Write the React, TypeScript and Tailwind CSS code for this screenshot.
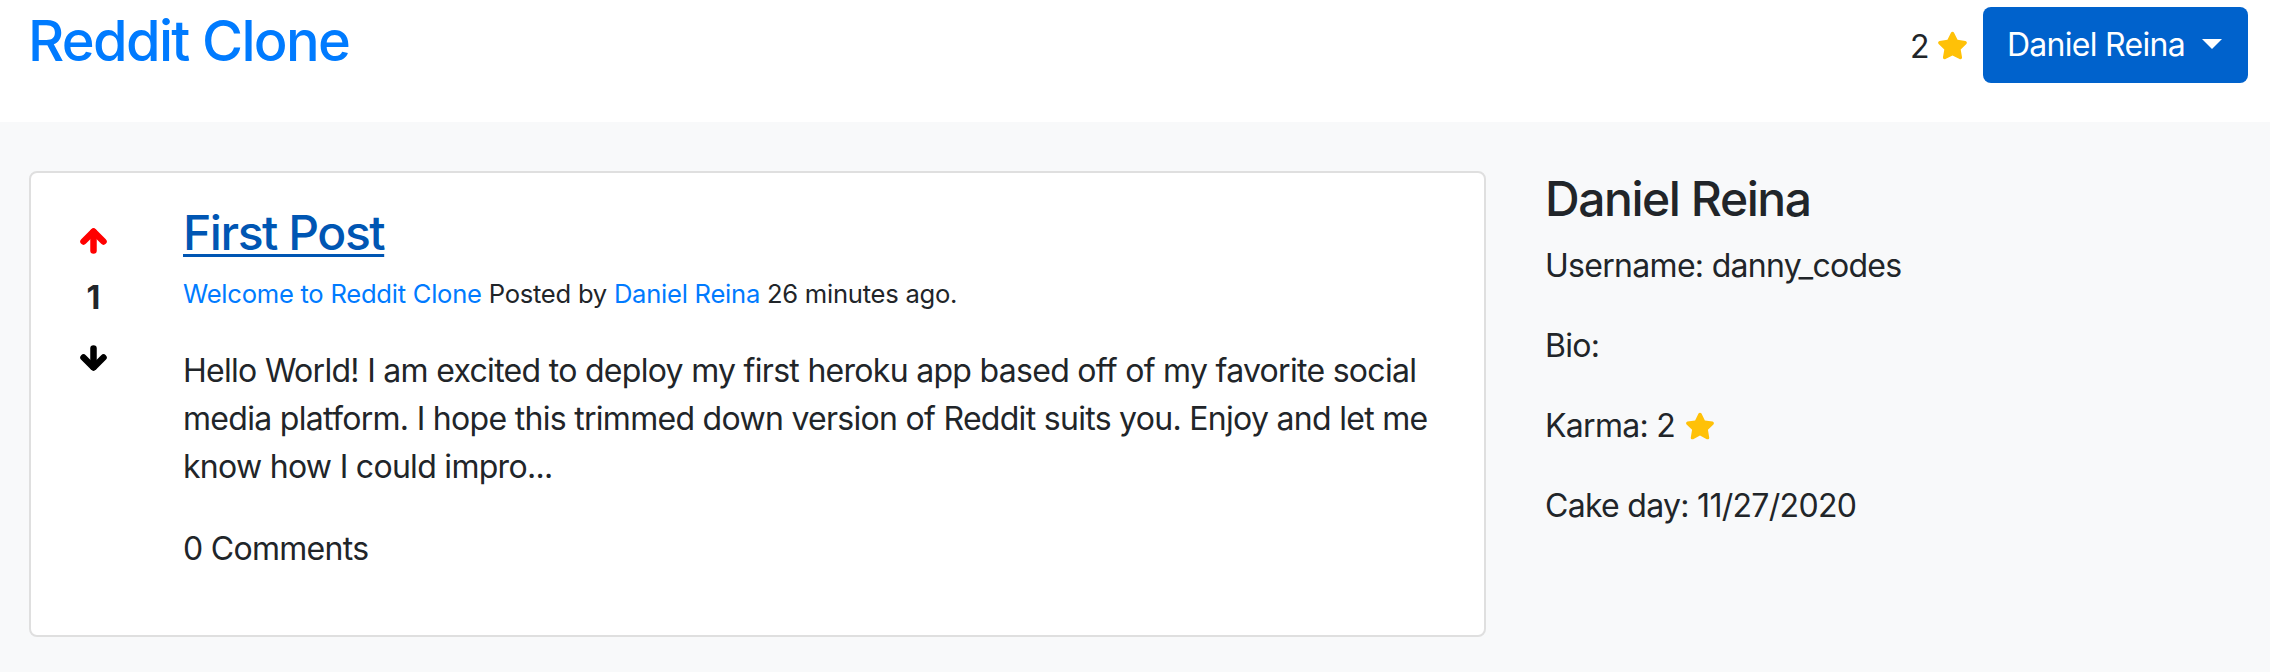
import React from "react";
import { FaStar } from "react-icons/fa";

function Arrow({ down, color }: { down?: boolean; color: string }) {
  return (
    <svg
      width="27"
      height="26"
      viewBox="0 0 27 26"
      className={down ? "rotate-180" : ""}
      fill="none"
      stroke={color}
      strokeWidth="6.5"
      strokeLinecap="round"
      strokeLinejoin="round"
    >
      <path d="M3.5 13.5 L13.5 3.5 L23.5 13.5" />
      <path d="M13.5 4 L13.5 22.5" />
    </svg>
  );
}

export default function App() {
  const t = "tracking-[-0.03em]";
  const b = "tracking-[-0.022em]";
  return (
    <div className="min-h-screen flex flex-col font-['Inter','Liberation_Sans',sans-serif] text-[#212529]">
      <header className="bg-white h-[122px] shrink-0 flex justify-between items-start pl-[28px] pr-[22px]">
        <a className={`mt-[8px] text-[56px] leading-[67px] font-medium text-[#007bff] ${t}`}>Reddit Clone</a>
        <div className="flex items-center mt-[7px]">
          <span className={`text-[32px] leading-[48px] pt-[4px] ${b}`}>2</span>
          <FaStar className="ml-[8px] text-[#ffc107]" size={31} />
          <button className={`ml-[15px] h-[76px] pl-[24px] pr-[26px] bg-[#0062cc] rounded-[8px] text-white text-[32px] leading-[48px] flex items-center ${b}`}>
            <span>Daniel Reina</span>
            <span className="ml-[17px] w-0 h-0 border-t-[10px] border-t-white border-x-[10px] border-x-transparent mt-[-3px]" />
          </button>
        </div>
      </header>
      <main className="flex-1 bg-[#f8f9fa] flex items-start pt-[48px]">
        <div className="ml-[29px] mt-[1px] w-[1457px] shrink-0 bg-white border-2 border-[#dfdfdf] rounded-[8px] flex">
          <div className="w-[124px] shrink-0 flex flex-col items-center pt-[55px]">
            <Arrow color="#ff0000" />
            <span className={`mt-[20px] text-[32px] leading-[48px] font-bold ${b}`}>1</span>
            <div className="mt-[23px]">
              <Arrow down color="#000000" />
            </div>
          </div>
          <div className="flex-1 pl-[28px] pr-[40px] pt-[31px] pb-[62px]">
            <a className={`block w-fit text-[48px] leading-[1.2] font-medium text-[#0056b3] underline decoration-[3px] underline-offset-[4px] ${t}`}>
              First Post
            </a>
            <div className="mt-[13px] text-[25.6px] leading-[38.4px] tracking-[-0.01em]">
              <span className="text-[#007bff]">Welcome to Reddit Clone</span> Posted by{" "}
              <span className="text-[#007bff]">Daniel Reina</span> 26 minutes ago.
            </div>
            <p className={`mt-[34px] text-[32px] leading-[48px] ${b}`}>
              Hello World! I am excited to deploy my first heroku app based off of my favorite social media platform. I hope this trimmed down version of Reddit suits you. Enjoy and let me know how I could impro...
            </p>
            <p className={`mt-[34px] text-[32px] leading-[48px] ${b}`}>0 Comments</p>
          </div>
        </div>
        <div className="ml-[59px] flex-1">
          <h4 className={`text-[48px] leading-[1.2] font-medium ${t}`}>Daniel Reina</h4>
          <p className={`mt-[14px] text-[32px] leading-[48px] ${b}`}>Username: danny_codes</p>
          <p className={`mt-[32px] text-[32px] leading-[48px] ${b}`}>Bio:</p>
          <p className={`mt-[32px] text-[32px] leading-[48px] flex items-center ${b}`}>
            Karma: 2 <FaStar className="ml-[10px] text-[#ffc107]" size={30} />
          </p>
          <p className={`mt-[32px] text-[32px] leading-[48px] ${b}`}>Cake day: 11/27/2020</p>
        </div>
      </main>
    </div>
  );
}
